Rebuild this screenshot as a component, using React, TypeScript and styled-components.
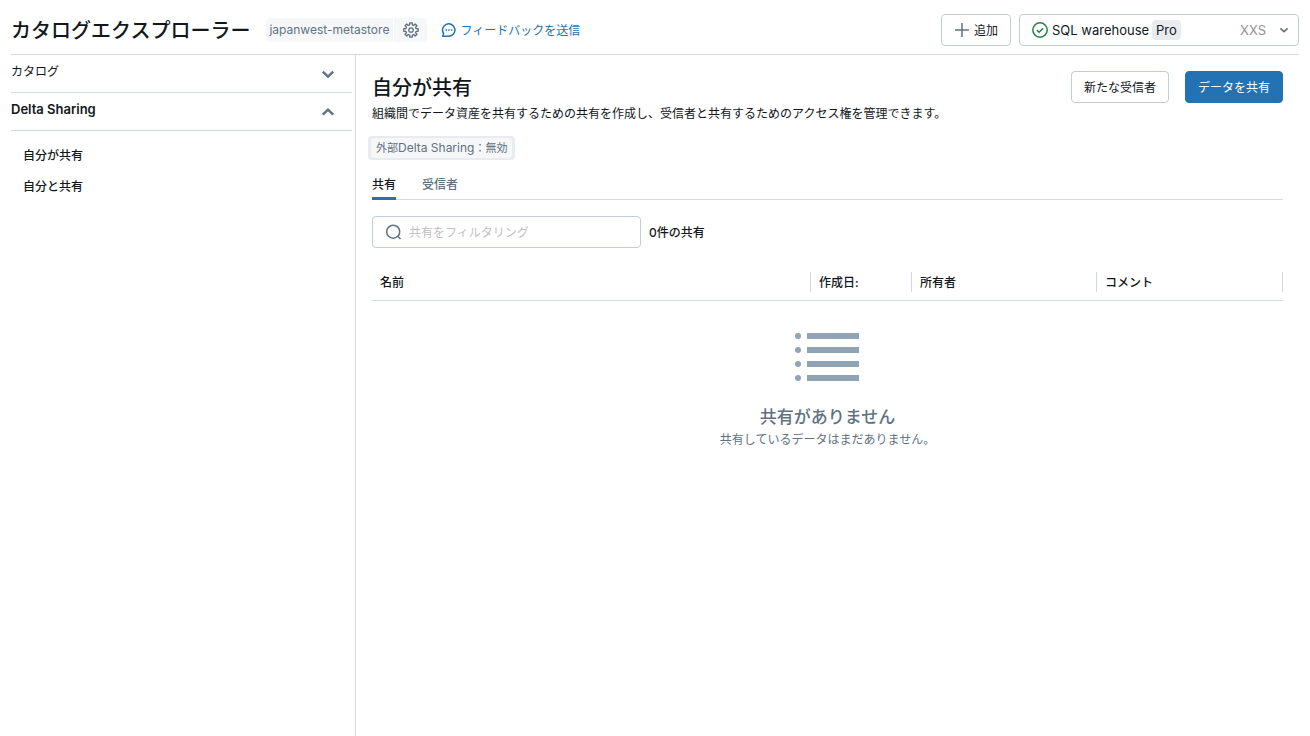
import React from "react";
import styled, { createGlobalStyle } from "styled-components";

const color = {
  text: "#11171c",
  muted: "#5f7281",
  line: "#d1d9e1",
  border: "#c0cdd8",
  blue: "#2272b4",
  green: "#277c43",
  tag: "#f6f7f9",
  tagDark: "#e8ebf0",
};

const GlobalStyle = createGlobalStyle`
  *, *::before, *::after { box-sizing: border-box; }
  body {
    margin: 0;
    background: #fff;
    color: ${color.text};
    font-family: Inter, "Noto Sans CJK JP", sans-serif;
    font-size: 12px;
    line-height: 20px;
  }
  button, input, select { font: inherit; color: inherit; }
  h1, h2, h3, p, ul { margin: 0; padding: 0; }
  a { text-decoration: none; color: inherit; }
`;

const Page = styled.div`
  display: flex;
  flex-direction: column;
  min-height: 100vh;
  padding: 0 11px;
`;

const Header = styled.header`
  display: flex;
  align-items: center;
  height: 55px;
  padding-bottom: 1px;
  padding-top: 6px;
  border-bottom: 1px solid ${color.line};
`;

const AppTitle = styled.h1`
  padding-top: 2px;
  font-size: 20px;
  line-height: 28px;
  font-weight: 500;
  margin-right: 16px;
  white-space: nowrap;
`;

const MetaTag = styled.div`
  display: flex;
  gap: 1px;
  color: ${color.muted};
  margin-right: 14px;
`;

const MetaName = styled.span`
  padding: 2px 4px 2px 3px;
  background: ${color.tag};
  border-radius: 4px 0 0 4px;
`;

const MetaButton = styled.button`
  display: grid;
  place-items: center;
  width: 33px;
  height: 24px;
  padding: 0;
  border: 0;
  background: ${color.tag};
  border-radius: 0 4px 4px 0;
`;

const FeedbackLink = styled.a`
  display: flex;
  align-items: center;
  gap: 4px;
  color: ${color.blue};

  span { padding-top: 2px; }
`;

const HeaderActions = styled.div`
  display: flex;
  gap: 8px;
  margin-left: auto;
`;

const Button = styled.button<{ $primary?: boolean }>`
  display: flex;
  align-items: center;
  justify-content: center;
  gap: 4px;
  height: 32px;
  padding: 0 12px;
  border: 1px solid ${(p) => (p.$primary ? color.blue : color.border)};
  border-radius: 4px;
  background: ${(p) => (p.$primary ? color.blue : "#fff")};
  color: ${(p) => (p.$primary ? "#fff" : color.text)};
  white-space: nowrap;

  span { padding-top: 2px; }
`;

const WarehousePicker = styled.label`
  display: flex;
  align-items: center;
  gap: 2px;
  width: 280px;
  height: 32px;
  padding: 0 8px 0 12px;
  border: 1px solid ${color.border};
  border-radius: 4px;
  font-size: 13px;
`;

const WarehouseSelect = styled.select`
  appearance: none;
  border: 0;
  padding: 0 0 0 2px;
  background: transparent;
`;

const ProBadge = styled.span`
  padding: 0 4px;
  border-radius: 4px;
  background: ${color.tagDark};
`;

const Size = styled.span`
  margin-left: auto;
  margin-right: 10px;
  color: #919191;
`;

const Body = styled.div`
  display: flex;
  flex: 1;
`;

const Sidebar = styled.nav`
  flex: none;
  width: 345px;
  padding-right: 3px;
  border-right: 1px solid ${color.line};
`;

const SectionButton = styled.button<{ $active?: boolean }>`
  display: flex;
  justify-content: space-between;
  width: 100%;
  height: 38px;
  padding: 6px 17px 0 0;
  border: 0;
  border-bottom: 1px solid ${color.line};
  background: none;
  text-align: left;
  font-size: ${(p) => (p.$active ? 13 : 12)}px;
  font-weight: ${(p) => (p.$active ? 600 : 400)};
  line-height: ${(p) => (p.$active ? 20 : 22)}px;

  svg { margin-top: 6px; }
`;

const SideList = styled.ul`
  display: flex;
  flex-direction: column;
  gap: 11px;
  padding: 15px 12px;
  list-style: none;
  font-weight: 500;
`;

const Main = styled.main`
  flex: 1;
  min-width: 0;
  padding: 16px;
`;

const TitleRow = styled.div`
  display: flex;
  justify-content: space-between;
  align-items: flex-start;
`;

const PageTitle = styled.h2`
  font-size: 20px;
  line-height: 34px;
  font-weight: 500;
`;

const Lead = styled.p`
  margin-top: -1px;
`;

const Actions = styled.div`
  display: flex;
  gap: 16px;
`;

const ExternalTag = styled.div`
  width: fit-content;
  margin: 12px 0 14px -4px;
  padding: 2px 3px;
  border-radius: 4px;
  background: ${color.tagDark};
  color: ${color.muted};

  span {
    display: block;
    padding: 0 5px;
    border-radius: 4px;
    background: ${color.tag};
  }

  small { font-size: 11px; }
`;

const Tabs = styled.div`
  display: flex;
  gap: 26px;
  border-bottom: 1px solid ${color.line};
`;

const Tab = styled.button<{ $active?: boolean }>`
  height: 26px;
  margin-bottom: -1px;
  padding: 0 0 1px;
  border: 0;
  border-bottom: 3px solid ${(p) => (p.$active ? color.blue : "transparent")};
  background: none;
  color: ${(p) => (p.$active ? color.text : color.muted)};
  font-weight: 500;
`;

const FilterRow = styled.div`
  display: flex;
  align-items: center;
  gap: 8px;
  margin: 16px 0;
  font-weight: 500;
`;

const Count = styled.span`
  padding-top: 2px;
`;

const SearchBox = styled.label`
  display: flex;
  align-items: center;
  gap: 7px;
  width: 269px;
  height: 32px;
  padding: 0 12px;
  border: 1px solid ${color.border};
  border-radius: 4px;
`;

const SearchInput = styled.input`
  flex: 1;
  min-width: 0;
  padding: 2px 0 0;
  border: 0;
  outline: 0;
  background: none;
  font-weight: 400;

  &::placeholder { color: #bfbfbf; opacity: 1; }
`;

const Table = styled.table`
  width: 100%;
  table-layout: fixed;
  border-collapse: separate;
  border-spacing: 0;
`;

const HeadCell = styled.th<{ $width?: number }>`
  width: ${(p) => (p.$width ? p.$width + "px" : "auto")};
  padding: 8px 0;
  border-bottom: 1px solid ${color.line};
  text-align: left;
  font-weight: 500;

  span {
    display: block;
    height: 20px;
    padding-left: 8px;
    border-right: 1px solid ${color.line};
    line-height: 22px;
  }
`;

const EmptyCell = styled.td`
  padding: 24px 0;
  color: ${color.muted};
  text-align: center;
  line-height: 22px;

  svg { display: block; margin: 0 auto; }
`;

const EmptyTitle = styled.h3`
  margin-top: 16px;
  font-size: 17px;
  line-height: 24px;
  font-weight: 500;
`;

// Eight teeth, each drawn as two outer and two inner corners.
const gearPoints = Array.from({ length: 8 }, (_, i) => {
  const at = (radius: number, degrees: number) => {
    const a = ((i * 45 + degrees) * Math.PI) / 180;
    return `${(8 + radius * Math.cos(a)).toFixed(2)},${(8 + radius * Math.sin(a)).toFixed(2)}`;
  };
  return [at(5.3, -14), at(7.3, -10), at(7.3, 10), at(5.3, 14)].join(" ");
}).join(" ");

const GearIcon = () => (
  <svg width="16" height="16" viewBox="0 0 16 16" fill="none" stroke={color.muted} strokeWidth="1.3" strokeLinejoin="round" aria-hidden="true">
    <polygon points={gearPoints} />
    <circle cx="8" cy="8" r="2.2" />
  </svg>
);

const ChatIcon = () => (
  <svg width="15" height="16" viewBox="0 0 15 16" fill="none" aria-hidden="true">
    <path d="M1.700 14.200l.9-2.700A6.200 6.200 0 1 1 8 14.200z" stroke={color.blue} strokeWidth="1.5" strokeLinejoin="round" />
    <path d="M4.500 7.300H6v1.500H4.500zM7.200 7.300h1.500v1.500H7.200zM9.900 7.300h1.500v1.500H9.900z" fill={color.blue} />
  </svg>
);

const PlusIcon = () => (
  <svg width="16" height="16" viewBox="0 0 16 16" stroke={color.muted} strokeWidth="1.5" aria-hidden="true">
    <path d="M8 1v14M1 8h14" />
  </svg>
);

const CheckIcon = () => (
  <svg width="16" height="16" viewBox="0 0 16 16" fill="none" stroke={color.green} strokeWidth="1.5" aria-hidden="true">
    <circle cx="8" cy="8" r="7.2" />
    <path d="M4.900 8.100l2.200 2.100 4-4" />
  </svg>
);

const Chevron = ({ up = false, small = false }: { up?: boolean; small?: boolean }) => (
  <svg width={small ? 12 : 14} height={small ? 12 : 14} viewBox="0 0 14 14" fill="none" stroke={color.muted} strokeWidth={small ? 1.9 : 2.4} aria-hidden="true">
    <path d={up ? "M1.800 9.600L7 4.600l5.200 5" : small ? "M2.800 5l4.200 4 4.200-4" : "M1.800 4.600L7 9.600l5.200-5"} />
  </svg>
);

const SearchIcon = () => (
  <svg width="17" height="16" viewBox="0 0 17 16" fill="none" stroke={color.muted} strokeWidth="1.5" aria-hidden="true">
    <circle cx="8.2" cy="7.700" r="6.500" />
    <path d="M12.800 12.300l2.700 2.700" />
  </svg>
);

const ListIcon = () => (
  <svg width="65" height="64" viewBox="0 0 65 64" fill="#90a4b5" aria-hidden="true">
    {[11, 25, 39, 53].map((y) => (
      <g key={y}>
        <circle cx="3" cy={y} r="3" />
        <rect x="12" y={y - 3} width="52" height="6" />
      </g>
    ))}
  </svg>
);

export default function App() {
  return (
    <Page>
      <GlobalStyle />
      <Header>
        <AppTitle>カタログエクスプローラー</AppTitle>
        <MetaTag>
          <MetaName>japanwest-metastore</MetaName>
          <MetaButton aria-label="設定"><GearIcon /></MetaButton>
        </MetaTag>
        <FeedbackLink href="#feedback"><ChatIcon /><span>フィードバックを送信</span></FeedbackLink>
        <HeaderActions>
          <Button><PlusIcon /><span>追加</span></Button>
          <WarehousePicker>
            <CheckIcon />
            <WarehouseSelect aria-label="SQL warehouse">
              <option>SQL warehouse</option>
            </WarehouseSelect>
            <ProBadge>Pro</ProBadge>
            <Size>XXS</Size>
            <Chevron small />
          </WarehousePicker>
        </HeaderActions>
      </Header>
      <Body>
        <Sidebar>
          <SectionButton aria-expanded={false}>カタログ<Chevron /></SectionButton>
          <SectionButton $active aria-expanded={true}>Delta Sharing<Chevron up /></SectionButton>
          <SideList>
            <li><a href="#shared-by-me">自分が共有</a></li>
            <li><a href="#shared-with-me">自分と共有</a></li>
          </SideList>
        </Sidebar>
        <Main>
          <TitleRow>
            <PageTitle>自分が共有</PageTitle>
            <Actions>
              <Button><span>新たな受信者</span></Button>
              <Button $primary><span>データを共有</span></Button>
            </Actions>
          </TitleRow>
          <Lead>組織間でデータ資産を共有するための共有を作成し、受信者と共有するためのアクセス権を管理できます。</Lead>
          <ExternalTag>
            <span><small>外部</small>Delta Sharing<small>：無効</small></span>
          </ExternalTag>
          <Tabs role="tablist">
            <Tab role="tab" aria-selected={true} $active>共有</Tab>
            <Tab role="tab" aria-selected={false}>受信者</Tab>
          </Tabs>
          <FilterRow>
            <SearchBox>
              <SearchIcon />
              <SearchInput aria-label="共有をフィルタリング" placeholder="共有をフィルタリング" />
            </SearchBox>
            <Count>0件の共有</Count>
          </FilterRow>
          <Table>
            <thead>
              <tr>
                <HeadCell><span>名前</span></HeadCell>
                <HeadCell $width={101}><span>作成日:</span></HeadCell>
                <HeadCell $width={185}><span>所有者</span></HeadCell>
                <HeadCell $width={186}><span>コメント</span></HeadCell>
              </tr>
            </thead>
            <tbody>
              <tr>
                <EmptyCell colSpan={4}>
                  <ListIcon />
                  <EmptyTitle>共有がありません</EmptyTitle>
                  <p>共有しているデータはまだありません。</p>
                </EmptyCell>
              </tr>
            </tbody>
          </Table>
        </Main>
      </Body>
    </Page>
  );
}
